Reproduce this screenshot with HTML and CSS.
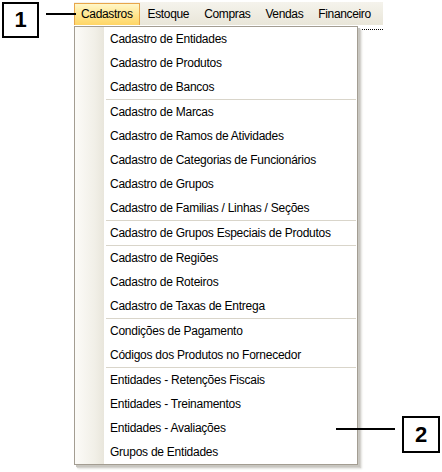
FILE: index.html
```html
<!DOCTYPE html>
<html lang="pt-BR">
<head>
<meta charset="utf-8">
<title>Menu Cadastros</title>
<link rel="stylesheet" href="styles.css">
</head>
<body>
<div class="stage">
  <nav class="menubar">
    <div class="menu-item active">Cadastros</div>
    <div class="menu-item">Estoque</div>
    <div class="menu-item">Compras</div>
    <div class="menu-item">Vendas</div>
    <div class="menu-item">Financeiro</div>
  </nav>
  <div class="dotted"></div>

  <ul class="dropdown">
    <li class="entry">Cadastro de Entidades</li>
    <li class="entry">Cadastro de Produtos</li>
    <li class="entry">Cadastro de Bancos</li>
    <li class="sep"></li>
    <li class="entry">Cadastro de Marcas</li>
    <li class="entry">Cadastro de Ramos de Atividades</li>
    <li class="entry">Cadastro de Categorias de Funcionários</li>
    <li class="entry">Cadastro de Grupos</li>
    <li class="entry">Cadastro de Familias / Linhas / Seções</li>
    <li class="sep"></li>
    <li class="entry">Cadastro de Grupos Especiais de Produtos</li>
    <li class="sep"></li>
    <li class="entry">Cadastro de Regiões</li>
    <li class="entry">Cadastro de Roteiros</li>
    <li class="entry">Cadastro de Taxas de Entrega</li>
    <li class="sep"></li>
    <li class="entry">Condições de Pagamento</li>
    <li class="entry">Códigos dos Produtos no Fornecedor</li>
    <li class="sep"></li>
    <li class="entry">Entidades - Retenções Fiscais</li>
    <li class="entry">Entidades - Treinamentos</li>
    <li class="entry">Entidades - Avaliações</li>
    <li class="entry">Grupos de Entidades</li>
  </ul>

  <div class="callout callout-1">1</div>
  <div class="leader leader-1"></div>
  <div class="callout callout-2">2</div>
  <div class="leader leader-2"></div>
</div>
</body>
</html>
```

FILE: styles.css
```css
html, body {
  margin: 0;
  padding: 0;
  background: #ffffff;
}

.stage {
  position: relative;
  width: 442px;
  height: 472px;
  overflow: hidden;
  font-family: "Liberation Sans", Arial, sans-serif;
  font-size: 12px;
  letter-spacing: -0.25px;
  color: #000000;
}

.menubar {
  display: flex;
  margin: 2px 0 0 74px;
  width: 309px;
  height: 23px;
  overflow: hidden;
  background: linear-gradient(#f5f3ec, #e9e6d9);
}

.menu-item {
  padding: 0 6px 0 7px;
  height: 21px;
  margin-top: 1px;
  line-height: 21px;
  border: 1px solid transparent;
  white-space: nowrap;
  letter-spacing: -0.35px;
}

.menu-item.active {
  padding: 0 6px 0 6px;
  border-color: #e8a64a;
  background: linear-gradient(#fff7c8, #ffe58c 55%, #ffd566);
}

.dotted {
  position: absolute;
  left: 358px;
  top: 29px;
  width: 25px;
  border-top: 1px dotted #000000;
}

.dropdown {
  position: absolute;
  left: 74px;
  top: 26px;
  width: 282px;
  height: 437px;
  margin: 0;
  padding: 0;
  list-style: none;
  border: 1px solid #a39d92;
  background: linear-gradient(to right, #fcfbf8 0, #f1efe7 20px, #e9e6dc 29px, #ffffff 29px);
  box-shadow: 2px 2px 0 #c8c6c0, 3px 3px 1px #d6d4d0, 4px 4px 2px #e8e7e4;
}

.entry {
  height: 24px;
  line-height: 24px;
  padding-left: 35px;
  white-space: nowrap;
}

.sep {
  height: 1px;
  margin: 0 1px 0 31px;
  background: #d9d5ca;
}

.callout {
  position: absolute;
  box-sizing: border-box;
  border: 2px solid #000000;
  background: #ffffff;
  font-weight: bold;
  font-size: 22px;
  letter-spacing: 0;
  display: flex;
  align-items: center;
  justify-content: center;
}

.callout-1 {
  left: 2px;
  top: 2px;
  width: 37px;
  height: 36px;
}

.callout-2 {
  left: 402px;
  top: 416px;
  width: 38px;
  height: 37px;
}

.leader {
  position: absolute;
  height: 2px;
  background: #000000;
}

.leader-1 {
  left: 46px;
  top: 13px;
  width: 30px;
}

.leader-2 {
  left: 336px;
  top: 428px;
  width: 59px;
}
```
